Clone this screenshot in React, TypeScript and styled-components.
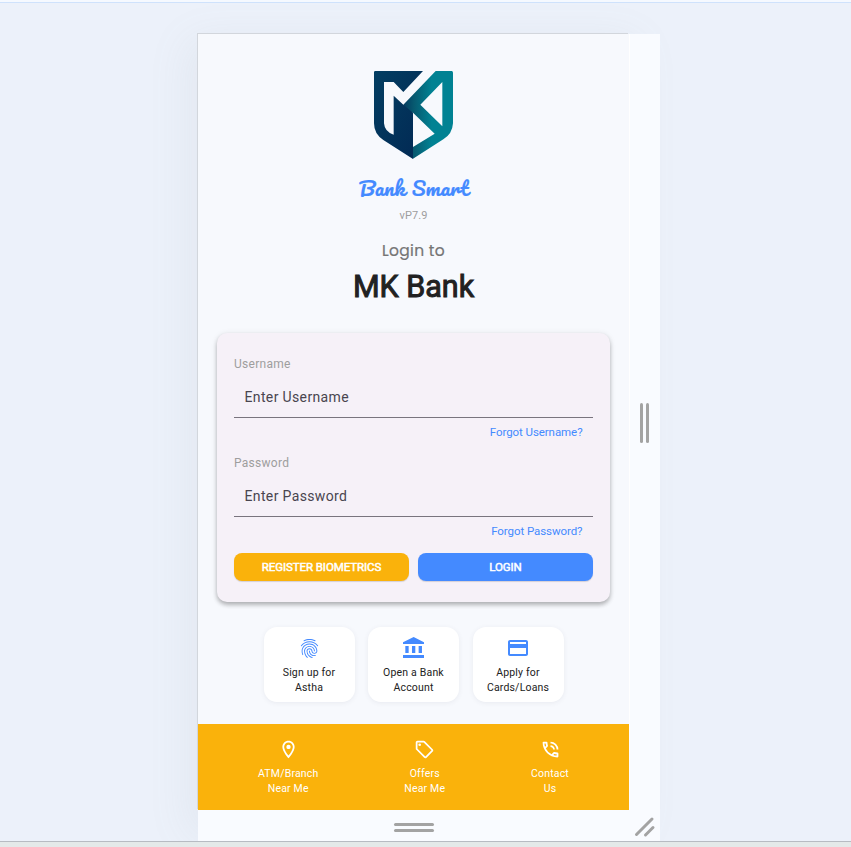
import React from "react";
import styled, { createGlobalStyle } from "styled-components";
import {
  MdFingerprint,
  MdCreditCard,
  MdOutlineLocationOn,
  MdOutlineLocalOffer,
  MdOutlinePhoneInTalk,
} from "react-icons/md";

const GlobalStyle = createGlobalStyle`
  *, *::before, *::after { box-sizing: border-box; }
  body { margin: 0; font-family: Roboto, sans-serif; background: #ecf1fa; overflow: hidden; }
  button, input { font-family: inherit; }
`;

const Viewport = styled.div`
  height: 847px;
  display: flex;
  flex-direction: column;
  background: #ecf1fa;
`;

const TopEdge = styled.div`
  height: 3px;
  flex: none;
  background: #f5f9ff;
  border-bottom: 1px solid #cfe2fc;
`;

const BottomEdge = styled.div`
  height: 6px;
  flex: none;
  background: #e4e9e9;
  border-top: 1px solid #b7bbc2;
`;

const Stage = styled.div`
  flex: 1;
  min-height: 0;
  padding: 31px 0 0 198px;
  overflow: hidden;
`;

const Frame = styled.div`
  width: 462px;
  height: 807px;
  display: grid;
  grid-template-columns: 431px 31px;
  grid-template-rows: 776px 31px;
  background: #f9fbff;
  box-shadow: -16px 0 40px -6px rgba(130, 145, 145, 0.09);
`;

const Screen = styled.main`
  display: flex;
  flex-direction: column;
  align-items: center;
  background: #f7f9fd;
  box-shadow: -1px -1px 0 #d2d6dc, 1px 0 0 #ffffff;
`;

const Logo = styled.svg`
  display: block;
  width: 79px;
  height: 88px;
  margin-top: 37px;
`;

const Brand = styled.div`
  margin-top: 13px;
  height: 32px;
  line-height: 32px;
  font-family: Pacifico, cursive;
  font-weight: 400;
  font-size: 20px;
  letter-spacing: 0.2px;
  word-spacing: 1px;
  color: #448aff;
  -webkit-text-stroke: 0.2px #448aff;
  white-space: nowrap;
`;

const Version = styled.div`
  margin-top: 4px;
  height: 16px;
  line-height: 16px;
  font-size: 11px;
  letter-spacing: 0.1px;
  color: #9e9e9e;
`;

const LoginTo = styled.div`
  margin-top: 15px;
  height: 24px;
  line-height: 24px;
  font-family: Poppins, Inter, sans-serif;
  font-size: 15.5px;
  letter-spacing: 0.3px;
  color: #757575;
  -webkit-text-stroke: 0.2px #757575;
`;

const BankName = styled.h1`
  margin: 6px 0 0;
  height: 36px;
  line-height: 36px;
  font-size: 30.5px;
  font-weight: 400;
  color: #212121;
  -webkit-text-stroke: 1px #212121;
`;

const Card = styled.form`
  width: 393px;
  height: 269px;
  margin-top: 28px;
  padding: 21px 17px 0;
  border-radius: 10px;
  background: #f6f1f8;
  box-shadow: 0 3px 4px rgba(0, 0, 0, 0.24), 0 1px 6px rgba(0, 0, 0, 0.1);
`;

const Field = styled.div`
  height: 99px;
  display: flex;
  flex-direction: column;
`;

const Label = styled.label`
  height: 20px;
  line-height: 20px;
  font-size: 12px;
  letter-spacing: 0.28px;
  color: #9e9e9e;
`;

const TextInput = styled.input`
  height: 44px;
  padding: 2px 10.5px 0;
  border: 0;
  border-bottom: 1px solid #79747e;
  background: transparent;
  outline: none;
  border-radius: 0;
  font-size: 14px;
  letter-spacing: 0.36px;
  color: #49454f;
  &::placeholder { color: #49454f; opacity: 1; }
`;

const ForgotLink = styled.a`
  margin: 5px 10.5px 0 0;
  height: 18px;
  line-height: 18px;
  align-self: flex-end;
  font-size: 11.5px;
  letter-spacing: -0.07px;
  color: #448aff;
`;

const ButtonRow = styled.div`
  margin-top: 1px;
  display: grid;
  grid-template-columns: 1fr 1fr;
  gap: 9px;
`;

const ActionButton = styled.button<{ $color: string }>`
  height: 28px;
  padding: 0;
  border: 0;
  border-radius: 8px;
  background: ${(p) => p.$color};
  color: #fff;
  font-size: 11.5px;
  font-weight: 400;
  -webkit-text-stroke: 0.5px #fff;
  letter-spacing: -0.08px;
  box-shadow: 0 1px 1px rgba(0, 0, 0, 0.14);
`;

const Shortcuts = styled.div`
  margin-top: 25px;
  display: flex;
  gap: 13.5px;
`;

const Shortcut = styled.div`
  width: 91px;
  height: 75px;
  padding-top: 9px;
  display: flex;
  flex-direction: column;
  align-items: center;
  border-radius: 13px;
  background: #fff;
  box-shadow: 0 1px 5px rgba(60, 70, 90, 0.08);
  color: #448aff;
`;

const IconSlot = styled.div`
  width: 24px;
  height: 24px;
  display: grid;
  place-items: center;
`;

const Caption = styled.div<{ $color: string; $gap: number }>`
  margin-top: ${(p) => p.$gap}px;
  font-size: 10.5px;
  line-height: 15px;
  letter-spacing: 0.18px;
  text-align: center;
  white-space: nowrap;
  color: ${(p) => p.$color};
`;

const NavBar = styled.nav`
  width: 431px;
  height: 86px;
  margin-top: auto;
  padding: 13px 60px 0;
  display: flex;
  justify-content: space-between;
  background: #fab20b;
  color: #fff;
`;

const NavItem = styled.div`
  display: flex;
  flex-direction: column;
  align-items: center;
`;

const SideHandle = styled.div`
  display: flex;
  justify-content: center;
  align-items: center;
  gap: 3px;
  padding-top: 2px;
`;

const BottomHandle = styled.div`
  display: flex;
  flex-direction: column;
  justify-content: center;
  align-items: center;
  gap: 3px;
  padding-top: 4px;
`;

const Grip = styled.span<{ $w: number; $h: number }>`
  width: ${(p) => p.$w}px;
  height: ${(p) => p.$h}px;
  border-radius: 2px;
  background: #a3a3a3;
`;

const Corner = styled.svg`
  display: block;
  width: 31px;
  height: 31px;
`;

const ShieldLogo = () => (
  <Logo viewBox="102 33 237 264" preserveAspectRatio="none">
    <defs>
      <linearGradient id="body" gradientUnits="userSpaceOnUse" x1="180" y1="134" x2="275" y2="134">
        <stop offset="0" stopColor="#02315a" />
        <stop offset="0.45" stopColor="#075a70" />
        <stop offset="1" stopColor="#018293" />
      </linearGradient>
      <linearGradient id="navy" x1="0" y1="0" x2="1" y2="1">
        <stop offset="0" stopColor="#033e62" />
        <stop offset="1" stopColor="#022853" />
      </linearGradient>
    </defs>
    <path
      fill="url(#body)"
      fillRule="evenodd"
      d="M190 134L287 33H335Q339 33 339 38V190Q337 222 310 238L219 296V158L190 150ZM307 66L241 134L307 199ZM219 158V261L284 221Z"
    />
    <path
      fill="url(#navy)"
      d="M106 33H249L190 96L161 66H132V190Q134 216 161 224V107L190 134L219 158V297L130 240Q102 222 102 190V37Q102 33 106 33Z"
    />
  </Logo>
);

const BankIcon = () => (
  <svg width="21.3" height="21.3" viewBox="0 0 64 64" fill="currentColor">
    <path d="M0 16L32 0L64 16V21H0ZM7 27H17V48H7ZM27 27H37V48H27ZM47 27H57V48H47ZM0 54H64V63H0Z" />
  </svg>
);

const shortcuts = [
  { icon: <MdFingerprint size={23} />, lines: ["Sign up for", "Astha"] },
  { icon: <BankIcon />, lines: ["Open a Bank", "Account"] },
  { icon: <MdCreditCard size={24} />, lines: ["Apply for", "Cards/Loans"] },
];

const navItems = [
  { icon: <MdOutlineLocationOn size={21} />, lines: ["ATM/Branch", "Near Me"] },
  { icon: <MdOutlineLocalOffer size={21} />, lines: ["Offers", "Near Me"] },
  { icon: <MdOutlinePhoneInTalk size={21} />, lines: ["Contact", "Us"] },
];

const App: React.FC = () => (
  <>
    <GlobalStyle />
    <Viewport>
      <TopEdge />
      <Stage>
        <Frame>
          <Screen>
            <ShieldLogo />
            <Brand>Bank Smart</Brand>
            <Version>vP7.9</Version>
            <LoginTo>Login to</LoginTo>
            <BankName>MK Bank</BankName>
            <Card>
              <Field>
                <Label htmlFor="username">Username</Label>
                <TextInput id="username" placeholder="Enter Username" />
                <ForgotLink>Forgot Username?</ForgotLink>
              </Field>
              <Field>
                <Label htmlFor="password">Password</Label>
                <TextInput id="password" type="password" placeholder="Enter Password" />
                <ForgotLink>Forgot Password?</ForgotLink>
              </Field>
              <ButtonRow>
                <ActionButton type="button" $color="#fab20b">REGISTER BIOMETRICS</ActionButton>
                <ActionButton type="button" $color="#448aff">LOGIN</ActionButton>
              </ButtonRow>
            </Card>
            <Shortcuts>
              {shortcuts.map((s) => (
                <Shortcut key={s.lines[0]}>
                  <IconSlot>{s.icon}</IconSlot>
                  <Caption $color="#212121" $gap={5}>
                    {s.lines[0]}
                    <br />
                    {s.lines[1]}
                  </Caption>
                </Shortcut>
              ))}
            </Shortcuts>
            <NavBar>
              {navItems.map((n) => (
                <NavItem key={n.lines[0]}>
                  <IconSlot>{n.icon}</IconSlot>
                  <Caption $color="#ffffff" $gap={5}>
                    {n.lines[0]}
                    <br />
                    {n.lines[1]}
                  </Caption>
                </NavItem>
              ))}
            </NavBar>
          </Screen>
          <SideHandle>
            <Grip $w={3} $h={40} />
            <Grip $w={3} $h={40} />
          </SideHandle>
          <BottomHandle>
            <Grip $w={40} $h={3} />
            <Grip $w={40} $h={3} />
          </BottomHandle>
          <Corner viewBox="0 0 31 31" stroke="#a3a3a3" strokeWidth="3" strokeLinecap="round">
            <path d="M7.500 24.500L23 9M16.500 25L24 17.500" />
          </Corner>
        </Frame>
      </Stage>
      <BottomEdge />
    </Viewport>
  </>
);

export default App;
